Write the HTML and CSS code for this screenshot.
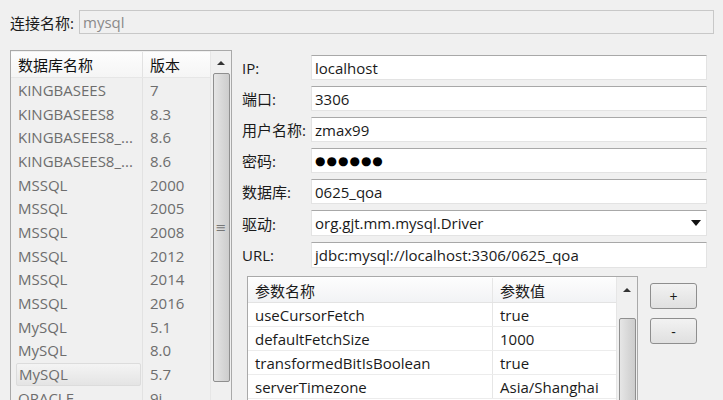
FILE: index.html
```html
<!DOCTYPE html>
<html>
<head>
<meta charset="utf-8">
<link rel="stylesheet" href="styles.css">
</head>
<body>
<div class="app">
  <div class="top-row">
    <span class="top-label">连接名称:</span>
    <div class="field disabled">mysql</div>
  </div>
  <div class="main">
    <div class="db-list">
      <div class="list-body">
        <div class="list-head">
          <div class="c1">数据库名称</div>
          <div class="c2">版本</div>
        </div>
        <div class="list-row"><div class="c1">KINGBASEES</div><div class="c2">7</div></div>
        <div class="list-row"><div class="c1">KINGBASEES8</div><div class="c2">8.3</div></div>
        <div class="list-row"><div class="c1">KINGBASEES8_...</div><div class="c2">8.6</div></div>
        <div class="list-row"><div class="c1">KINGBASEES8_...</div><div class="c2">8.6</div></div>
        <div class="list-row"><div class="c1">MSSQL</div><div class="c2">2000</div></div>
        <div class="list-row"><div class="c1">MSSQL</div><div class="c2">2005</div></div>
        <div class="list-row"><div class="c1">MSSQL</div><div class="c2">2008</div></div>
        <div class="list-row"><div class="c1">MSSQL</div><div class="c2">2012</div></div>
        <div class="list-row"><div class="c1">MSSQL</div><div class="c2">2014</div></div>
        <div class="list-row"><div class="c1">MSSQL</div><div class="c2">2016</div></div>
        <div class="list-row"><div class="c1">MySQL</div><div class="c2">5.1</div></div>
        <div class="list-row"><div class="c1">MySQL</div><div class="c2">8.0</div></div>
        <div class="list-row selected"><div class="c1"><span class="sel">MySQL</span></div><div class="c2">5.7</div></div>
        <div class="list-row"><div class="c1">ORACLE</div><div class="c2">9i</div></div>
      </div>
      <div class="vscroll">
        <div class="arrow-up"></div>
        <div class="thumb"><span class="grip">≡</span></div>
      </div>
    </div>
    <div class="form">
      <div class="frow"><span class="flabel">IP:</span><div class="field">localhost</div></div>
      <div class="frow"><span class="flabel">端口:</span><div class="field">3306</div></div>
      <div class="frow"><span class="flabel">用户名称:</span><div class="field">zmax99</div></div>
      <div class="frow"><span class="flabel">密码:</span><div class="field pwd">●●●●●●</div></div>
      <div class="frow"><span class="flabel">数据库:</span><div class="field">0625_qoa</div></div>
      <div class="frow"><span class="flabel">驱动:</span><div class="field combo"><span>org.gjt.mm.mysql.Driver</span><span class="caret"></span></div></div>
      <div class="frow"><span class="flabel">URL:</span><div class="field">jdbc:mysql://localhost:3306/0625_qoa</div></div>
      <div class="params-row">
        <div class="params">
          <div class="ptable">
            <div class="phead"><div class="p1">参数名称</div><div class="p2">参数值</div></div>
            <div class="prow"><div class="p1">useCursorFetch</div><div class="p2">true</div></div>
            <div class="prow"><div class="p1">defaultFetchSize</div><div class="p2">1000</div></div>
            <div class="prow"><div class="p1">transformedBitIsBoolean</div><div class="p2">true</div></div>
            <div class="prow"><div class="p1">serverTimezone</div><div class="p2">Asia/Shanghai</div></div>
          </div>
          <div class="vscroll small">
            <div class="arrow-up"></div>
            <div class="thumb"><span class="grip">≡</span></div>
          </div>
        </div>
        <div class="buttons">
          <div class="btn">+</div>
          <div class="btn">-</div>
        </div>
      </div>
    </div>
  </div>
</div>
</body>
</html>
```
FILE: styles.css
```css
html, body {
  margin: 0;
  padding: 0;
  background: #f0f0f0;
  overflow: hidden;
}
body {
  width: 723px;
  height: 400px;
  font-family: "Open Sans", "Noto Sans CJK SC", sans-serif;
  font-size: 15px;
  color: #1a1a1a;
}
.app {
  padding: 10px 10px 0 10px;
}
.top-row {
  display: flex;
  align-items: center;
  height: 24px;
}
.top-label {
  width: 69px;
  flex: none;
}
.field {
  flex: 1;
  height: 25px;
  box-sizing: border-box;
  background: #fff;
  border: 1px solid #e3e3e3;
  border-top-color: #a8a8a8;
  padding: 0 3px;
  display: flex;
  align-items: center;
  white-space: nowrap;
  overflow: hidden;
}
.field.disabled {
  height: 24px;
  background: #f0f0f0;
  border: 1px solid #c8c8c8;
  color: #8a8a8a;
  margin-right: -1px;
}
.main {
  display: flex;
  margin-top: 16px;
}
.db-list {
  width: 222px;
  height: 360px;
  box-sizing: border-box;
  border: 1px solid #a9a9a9;
  display: flex;
  flex: none;
}
.list-body {
  flex: 1;
  padding-top: 1px;
  background: #f0f0f0;
}
.list-head {
  display: flex;
  height: 25px;
  align-items: center;
  background: linear-gradient(#fdfdfd, #f5f5f5);
  border-bottom: 1px solid #e6e6e6;
  color: #111;
}
.list-head .c1, .list-row .c1 {
  width: 132px;
  padding-left: 7px;
  box-sizing: border-box;
  border-right: 1px solid #e2e2e2;
  height: 100%;
  display: flex;
  align-items: center;
  white-space: nowrap;
}
.list-head .c2, .list-row .c2 {
  padding-left: 7px;
  display: flex;
  align-items: center;
  height: 100%;
}
.list-row {
  display: flex;
  height: 23.7px;
  color: #6d6d6d;
}
.list-row.selected .c1 {
  padding-left: 5px;
}
.sel {
  display: flex;
  align-items: center;
  width: 125px;
  height: 23px;
  box-sizing: border-box;
  padding-left: 2px;
  border: 1px solid #dcdcdc;
  border-radius: 2px;
  background: linear-gradient(#f4f4f4, #e4e4e4);
}
.vscroll {
  width: 20px;
  flex: none;
  background: #f0f0f0;
  border-left: 1px solid #e6e6e6;
  display: flex;
  flex-direction: column;
  align-items: center;
}
.arrow-up {
  width: 0;
  height: 0;
  border-left: 4px solid transparent;
  border-right: 4px solid transparent;
  border-bottom: 4px solid #333;
  margin-top: 10px;
  margin-bottom: 8px;
}
.thumb {
  width: 17px;
  height: 309px;
  box-sizing: border-box;
  border: 1px solid #8f8f8f;
  border-radius: 2px;
  background: linear-gradient(90deg, #e6e6e6, #d6d6d6 60%, #cdcdcd);
  display: flex;
  align-items: center;
  justify-content: center;
  color: #777;
  font-size: 13px;
  font-family: "DejaVu Sans", sans-serif;
}
.form {
  flex: 1;
  margin-left: 10px;
  margin-top: 5px;
  display: flex;
  flex-direction: column;
  gap: 6px;
}
.frow {
  display: flex;
  align-items: center;
  margin-right: 6px;
}
.frow:nth-child(6), .frow:nth-child(7) {
  height: 26px;
}
.frow:nth-child(6) .field, .frow:nth-child(7) .field {
  height: 26px;
}
.flabel {
  width: 69px;
  flex: none;
}
.field.pwd {
  letter-spacing: 1px;
  font-family: "DejaVu Sans", sans-serif;
  font-size: 12px;
  color: #000;
}
.combo {
  justify-content: space-between;
}
.caret {
  width: 0;
  height: 0;
  border-left: 5px solid transparent;
  border-right: 5px solid transparent;
  border-top: 6px solid #111;
  margin-right: 2px;
}
.params-row {
  display: flex;
  margin-top: 2px;
  margin-left: 5px;
}
.params {
  width: 391px;
  height: 140px;
  box-sizing: border-box;
  border: 1px solid #a9a9a9;
  display: flex;
  background: #fff;
}
.ptable {
  flex: 1;
  padding-top: 1px;
}
.phead, .prow {
  display: flex;
  align-items: stretch;
}
.phead {
  height: 24px;
  background: linear-gradient(#fdfdfd, #f2f3f5);
  border-bottom: 1px solid #e3e3e3;
}
.prow {
  height: 23px;
  border-bottom: 1px solid #ececec;
}
.p1 {
  width: 245px;
  box-sizing: border-box;
  padding-left: 7px;
  border-right: 1px solid #e6e6e6;
  display: flex;
  align-items: center;
}
.p2 {
  padding-left: 7px;
  display: flex;
  align-items: center;
}
.vscroll.small .arrow-up {
  margin-top: 11px;
  margin-bottom: 26px;
}
.vscroll.small .thumb {
  height: 120px;
  padding-top: 120px;
}
.buttons {
  display: flex;
  flex-direction: column;
  gap: 9px;
  margin-left: 12px;
  margin-top: 7px;
}
.btn {
  width: 47px;
  height: 26px;
  box-sizing: border-box;
  border: 1px solid #8e8e8e;
  border-radius: 3px;
  background: linear-gradient(#f2f2f2, #e0e0e0);
  display: flex;
  align-items: center;
  justify-content: center;
  font-size: 14px;
}
```
